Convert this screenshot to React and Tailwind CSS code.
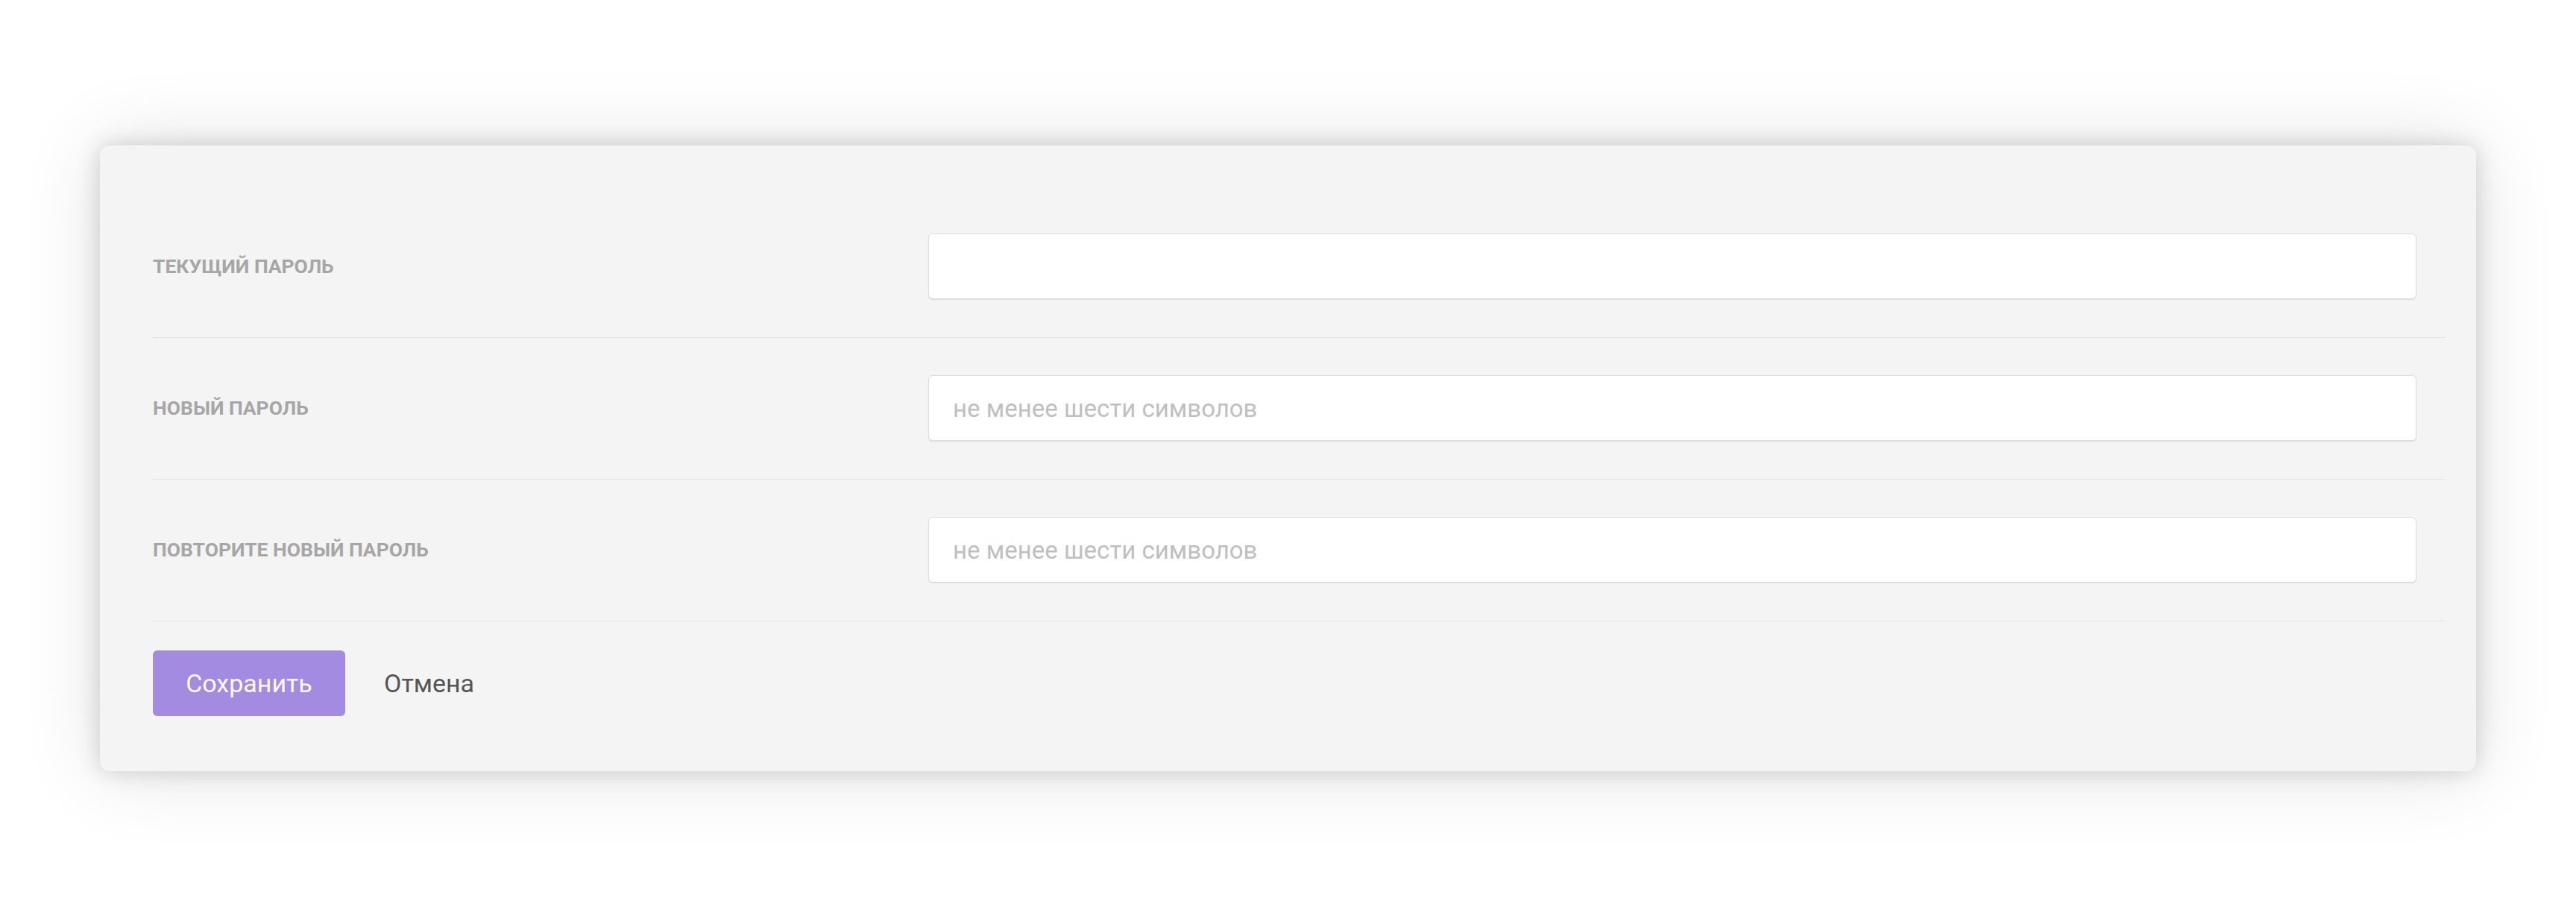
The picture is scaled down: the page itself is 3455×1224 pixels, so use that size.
const FIELDS = [
  { id: 'current', label: 'Текущий пароль', placeholder: '' },
  { id: 'new', label: 'Новый пароль', placeholder: 'не менее шести символов' },
  { id: 'repeat', label: 'Повторите новый пароль', placeholder: 'не менее шести символов' },
];

export default function App() {
  return (
    <div
      className="min-h-screen bg-white px-[134px] pt-[195px] pb-[189px]"
      style={{ fontFamily: 'Roboto, "Open Sans", "Noto Sans", sans-serif' }}
    >
      <div className="w-full rounded-[14px] bg-[#f4f4f4] pl-[71px] pr-[41px] pt-[68px] pb-[74px] shadow-[0_0_30px_rgba(0,0,0,0.17),0_0_110px_rgba(0,0,0,0.12)]">
        {/* Fields */}
        {FIELDS.map((field) => (
          <div
            key={field.id}
            className="flex items-center border-b border-[#e3e3e3] pt-[50px] pb-[51px]"
          >
            <label className="w-[1040px] shrink-0 text-[26.5px] font-bold uppercase leading-none text-[#a6a6a6]">
              {field.label}
            </label>
            <input
              type="password"
              placeholder={field.placeholder}
              className="mr-[39px] h-[88px] flex-1 rounded-[6px] border border-[#dcdcdc] bg-white pl-[32px] text-[33px] text-[#444] shadow-[0_1px_1px_rgba(0,0,0,0.1)] outline-none placeholder:text-[#bfbfbf]"
            />
          </div>
        ))}

        {/* Actions */}
        <div className="flex items-center gap-[52px] pt-[39px]">
          <button className="h-[88px] w-[258px] rounded-[6px] bg-[#a28be0] text-[34px] text-[#fbf8ff]">
            Сохранить
          </button>
          <button className="text-[34px] text-[#555555]">Отмена</button>
        </div>
      </div>
    </div>
  );
}
